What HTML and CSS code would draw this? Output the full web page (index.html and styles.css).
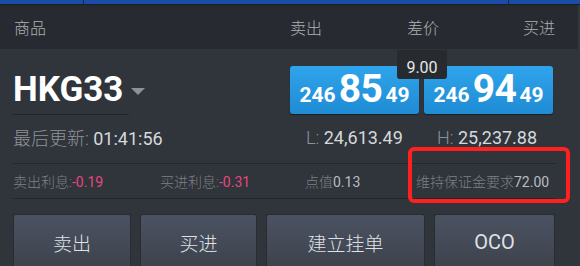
FILE: index.html
```html
<!DOCTYPE html>
<html>
<head>
<meta charset="utf-8">
<link rel="stylesheet" href="styles.css">
</head>
<body>
<div class="screen">
  <div class="topbar">
    <span class="seg seg-a"></span>
    <span class="seg seg-b"></span>
    <span class="seg seg-c"></span>
  </div>
  <div class="header">
    <span class="h-item h-first">商品</span>
    <span class="h-item">卖出</span>
    <span class="h-item">差价</span>
    <span class="h-item">买进</span>
  </div>
  <div class="main">
    <div class="quote">
      <div class="symbol-col">
        <div class="symbol">HKG33<span class="caret"></span></div>
      </div>
      <div class="prices">
        <div class="price-btn"><span class="p-sm">246</span><span class="p-lg">85</span><span class="p-sm">49</span></div>
        <div class="price-btn"><span class="p-sm">246</span><span class="p-lg">94</span><span class="p-sm">49</span></div>
        <div class="spread">9.00</div>
      </div>
    </div>
    <div class="stats">
      <div class="stat stat-time"><span class="lbl">最后更新:</span> <span class="val">01:41:56</span></div>
      <div class="stat stat-l"><span class="lbl">L:</span> <span class="val">24,613.49</span></div>
      <div class="stat stat-h"><span class="lbl">H:</span> <span class="val">25,237.88</span></div>
    </div>
    <div class="divider"></div>
    <div class="info">
      <div class="inf"><span class="ilbl">卖出利息:</span><span class="ineg">-0.19</span></div>
      <div class="inf"><span class="ilbl">买进利息:</span><span class="ineg">-0.31</span></div>
      <div class="inf"><span class="ilbl">点值</span><span class="ival">0.13</span></div>
      <div class="inf"><span class="ilbl">维持保证金要求</span><span class="ival">72.00</span></div>
    </div>
    <div class="divider"></div>
    <div class="actions">
      <div class="act">卖出</div>
      <div class="act">买进</div>
      <div class="act">建立挂单</div>
      <div class="act act-oco">OCO</div>
    </div>
  </div>
  <div class="highlight"></div>
</div>
</body>
</html>
```
FILE: styles.css
```css
html, body {
  margin: 0;
  padding: 0;
  background: #30343b;
}
.screen {
  position: relative;
  width: 580px;
  height: 266px;
  overflow: hidden;
  background: #30343b;
  font-family: "Roboto", "Noto Sans CJK SC", sans-serif;
}
.topbar {
  display: flex;
  height: 4px;
  background: #1b4ca8;
  border-bottom: 1px solid #1a1d22;
}
.seg {
  display: block;
  height: 4px;
}
.seg-a { width: 83px; border-right: 1px solid #1a2a4a; }
.seg-b { width: 424px; border-right: 1px solid #1a2a4a; }
.seg-c { flex: 1; }
.header {
  display: grid;
  grid-template-columns: 290px 117px 116px 1fr;
  height: 44px;
  align-items: center;
  background: #272a30;
  color: #aeb1b5;
  font-size: 16px;
  font-weight: 300;
  border-right: 2px solid #33373e;
}
.h-first { padding-left: 14px; }
.main {
  position: relative;
}
.quote {
  display: grid;
  grid-template-columns: 290px 1fr;
  height: 66px;
}
.symbol-col {
  display: flex;
  align-items: flex-end;
  padding-left: 12px;
}
.symbol {
  display: flex;
  align-items: center;
  width: 116px;
  font-size: 35px;
  line-height: 34px;
  font-weight: 700;
  color: #ffffff;
  padding-left: 1px;
  padding-bottom: 7px;
  border-bottom: 1px solid #22252a;
  white-space: nowrap;
}
.caret {
  display: inline-block;
  width: 0;
  height: 0;
  margin-left: 8px;
  margin-top: 2px;
  border-left: 7px solid transparent;
  border-right: 7px solid transparent;
  border-top: 7px solid #8d9199;
}
.prices {
  position: relative;
  display: flex;
  gap: 5px;
  padding-top: 17px;
}
.price-btn {
  display: flex;
  justify-content: center;
  align-items: baseline;
  gap: 2px;
  width: 129px;
  height: 48px;
  line-height: 46px;
  border-radius: 3px;
  background: linear-gradient(#2fa4ec, #1f8cd4);
  box-shadow: 0 1px 1px #1b1e22;
  color: #ffffff;
  font-weight: 700;
}
.p-sm { font-size: 21px; }
.p-lg { font-size: 39px; margin: 0 1px; letter-spacing: -0.5px; }
.spread {
  position: absolute;
  left: 107px;
  top: 1px;
  width: 50px;
  height: 29px;
  border-radius: 3px;
  background: #272a2f;
  color: #e6e7e9;
  font-size: 16px;
  display: flex;
  align-items: center;
  justify-content: center;
  padding-top: 6px;
  box-sizing: border-box;
}
.stats {
  display: grid;
  grid-template-columns: 290px 131px 1fr;
  height: 44px;
  align-items: center;
  padding-bottom: 4px;
  font-size: 18px;
}
.stat-time { padding-left: 13px; }
.stat-l { padding-left: 16px; }
.stat-h { padding-left: 16px; }
.lbl { color: #8e9298; font-weight: 300; }
.val { color: #d6d9dc; }
.divider {
  height: 1px;
  margin: 0 24px 0 13px;
  background: #24272c;
}
.info {
  display: grid;
  grid-template-columns: 147px 145px 111px 1fr;
  height: 34px;
  align-items: center;
  padding-left: 13px;
  font-size: 14px;
}
.ilbl { color: #7c8086; font-weight: 300; }
.ineg { color: #e8467f; }
.ival { color: #b9bcc0; }
.actions {
  display: grid;
  grid-template-columns: 116px 115px 157px 119px;
  gap: 11px;
  padding-left: 14px;
  margin-top: 16px;
}
.act {
  height: 54px;
  border-radius: 2px;
  background: linear-gradient(#4b5261, #3d424c);
  box-shadow: 0 0 0 1px #292c32;
  color: #dfe2e5;
  font-size: 19px;
  font-weight: 300;
  display: flex;
  align-items: center;
  justify-content: center;
}
.act-oco { font-size: 20px; font-weight: 400; }
.highlight {
  position: absolute;
  left: 408px;
  top: 147px;
  width: 162px;
  height: 56px;
  box-sizing: border-box;
  border: 4px solid #ff2020;
  border-radius: 6px;
}
```
